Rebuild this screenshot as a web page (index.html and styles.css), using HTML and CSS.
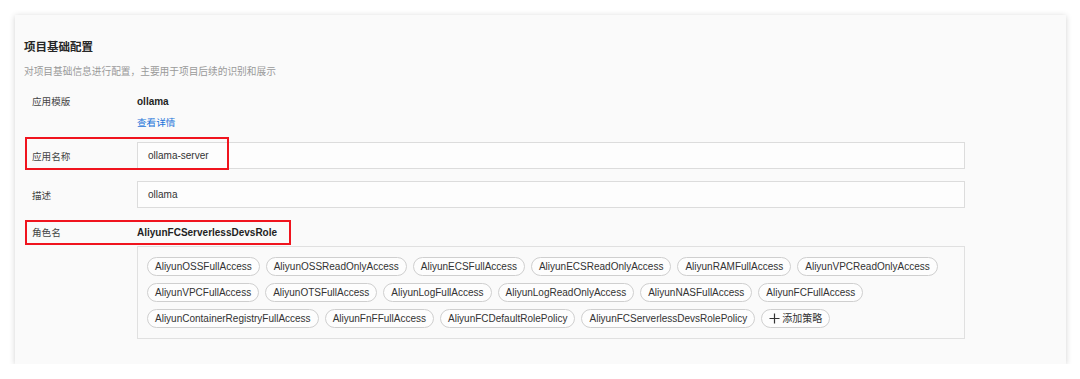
FILE: index.html
```html
<!DOCTYPE html>
<html lang="zh">
<head>
  <meta charset="UTF-8">
  <meta name="viewport" content="width=device-width, initial-scale=1.0">
  <title>项目基础配置</title>
  <link rel="stylesheet" href="styles.css">
</head>
<body>
  <div class="card">
    <h2 class="card-title">项目基础配置</h2>
    <p class="card-desc">对项目基础信息进行配置，主要用于项目后续的识别和展示</p>

    <div class="form">
      <div class="form-row row-template">
        <div class="label">应用模版</div>
        <div class="value">
          <div class="strong">ollama</div>
          <a class="link" href="#">查看详情</a>
        </div>
      </div>

      <div class="form-row row-input">
        <div class="label">应用名称</div>
        <div class="input">ollama-server</div>
        <span class="mark mark-name"></span>
      </div>

      <div class="form-row row-input row-desc">
        <div class="label">描述</div>
        <div class="input">ollama</div>
      </div>

      <div class="form-row row-role">
        <div class="label">角色名</div>
        <div class="strong">AliyunFCServerlessDevsRole</div>
        <span class="mark mark-role"></span>
      </div>

      <div class="policy-box">
        <span class="tag">AliyunOSSFullAccess</span>
        <span class="tag">AliyunOSSReadOnlyAccess</span>
        <span class="tag">AliyunECSFullAccess</span>
        <span class="tag">AliyunECSReadOnlyAccess</span>
        <span class="tag">AliyunRAMFullAccess</span>
        <span class="tag">AliyunVPCReadOnlyAccess</span>
        <span class="tag">AliyunVPCFullAccess</span>
        <span class="tag">AliyunOTSFullAccess</span>
        <span class="tag">AliyunLogFullAccess</span>
        <span class="tag">AliyunLogReadOnlyAccess</span>
        <span class="tag">AliyunNASFullAccess</span>
        <span class="tag">AliyunFCFullAccess</span>
        <span class="tag">AliyunContainerRegistryFullAccess</span>
        <span class="tag">AliyunFnFFullAccess</span>
        <span class="tag">AliyunFCDefaultRolePolicy</span>
        <span class="tag">AliyunFCServerlessDevsRolePolicy</span>
        <span class="tag tag-add">
          <svg width="11" height="11" viewBox="0 0 11 11"><path d="M5.5 0.5v10M0.5 5.5h10" stroke="#333" stroke-width="1.2" fill="none"/></svg>添加策略
        </span>
      </div>
    </div>
  </div>
</body>
</html>
```

FILE: styles.css
```css
body {
  margin: 0;
  background-color: #ffffff;
  font-family: "Liberation Sans", "Noto Sans CJK SC", sans-serif;
  color: #333;
}
.card {
  box-sizing: border-box;
  width: 1051px;
  height: 349px;
  margin: 15px 0 0 15px;
  padding: 24px 0 0 9px;
  background-color: #fafafa;
  box-shadow: 0 1px 6px rgba(0, 0, 0, 0.18);
}
.card-title {
  margin: 0;
  font-size: 11.5px;
  line-height: 16px;
  font-weight: 600;
  color: #262626;
}
.card-desc {
  margin: 9px 0 0;
  font-size: 9.7px;
  line-height: 16px;
  color: #999;
}
.form {
  margin: 11px 0 0 8px;
  font-size: 10px;
}
.form-row {
  display: flex;
  align-items: center;
  position: relative;
}
.row-template {
  align-items: flex-start;
  line-height: 21px;
}
.label {
  width: 105px;
  flex: none;
  font-size: 9.6px;
  color: #444;
}
.strong {
  font-weight: bold;
  color: #1f1f1f;
}
.link {
  display: block;
  font-size: 9.6px;
  color: #1a73d9;
  text-decoration: none;
}
.row-input {
  margin-top: 9px;
}
.row-desc {
  margin-top: 12px;
}
.input {
  box-sizing: border-box;
  width: 828px;
  height: 27px;
  padding-left: 10px;
  line-height: 25px;
  border: 1px solid #dcdcdc;
  background-color: #fdfdfd;
  color: #333;
}
.row-role {
  margin-top: 15px;
  line-height: 20px;
}
.mark {
  position: absolute;
  left: -7px;
  box-sizing: border-box;
  border: 2px solid #f0141e;
}
.mark-name {
  top: -5px;
  width: 204px;
  height: 33px;
}
.mark-role {
  top: -3px;
  width: 266px;
  height: 25px;
}
.policy-box {
  box-sizing: border-box;
  width: 828px;
  height: 93px;
  margin: 3px 0 0 105px;
  padding: 10px 9px;
  border: 1px solid #e0e0e0;
  display: flex;
  flex-wrap: wrap;
  align-content: flex-start;
  gap: 7px 6px;
}
.tag {
  box-sizing: border-box;
  height: 19px;
  padding: 0 7px;
  border: 1px solid #cfcfcf;
  border-radius: 10px;
  line-height: 17px;
  font-size: 10px;
  color: #333;
  background-color: #fdfdfd;
}
.tag-add {
  display: flex;
  align-items: center;
  gap: 2px;
  padding: 0 7px;
}
```
